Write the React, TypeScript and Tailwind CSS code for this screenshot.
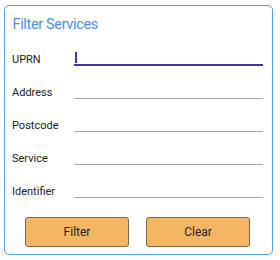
export default function App() {
  const fields = ["UPRN", "Address", "Postcode", "Service", "Identifier"];

  return (
    <div className="w-[280px] h-[260px] bg-white pt-[5px] pl-[4px]" style={{ fontFamily: "Roboto, 'Liberation Sans', sans-serif" }}>
      <div className="w-[269px] h-[250px] border-[1.5px] border-[#5a9de8] rounded-[5px] pt-[10px] pl-[7px] pr-[9px] flex flex-col">
        <h2 className="text-[14.5px] leading-[17px] tracking-[-0.35px] text-[#4a90e2] pl-[0.5px]">Filter Services</h2>

        <div className="flex flex-col">
          {fields.map((f, i) => (
            <div key={f} className="h-[33px] flex items-end">
              <span className="w-[62px] text-[11px] leading-[13px] text-[#222]">{f}</span>
              {i === 0 ? (
                <div className="flex-1 h-[22px] border-b-2 border-[#4332a8] flex items-end">
                  <span className="w-[2px] h-[11px] bg-[#4332a8] ml-[1px] mb-[1px]" />
                </div>
              ) : (
                <div className="flex-1 h-[22px] border-b border-[#a8a8a8]" />
              )}
            </div>
          ))}
        </div>

        <div className="flex justify-center gap-[17px] mt-[19px]">
          <button className="w-[104px] h-[30px] bg-[#f4b662] border border-[#7a6a55] rounded-[3px] text-[12px] text-[#222]">
            Filter
          </button>
          <button className="w-[104px] h-[30px] bg-[#f4b662] border border-[#7a6a55] rounded-[3px] text-[12px] text-[#222]">
            Clear
          </button>
        </div>
      </div>
    </div>
  );
}
